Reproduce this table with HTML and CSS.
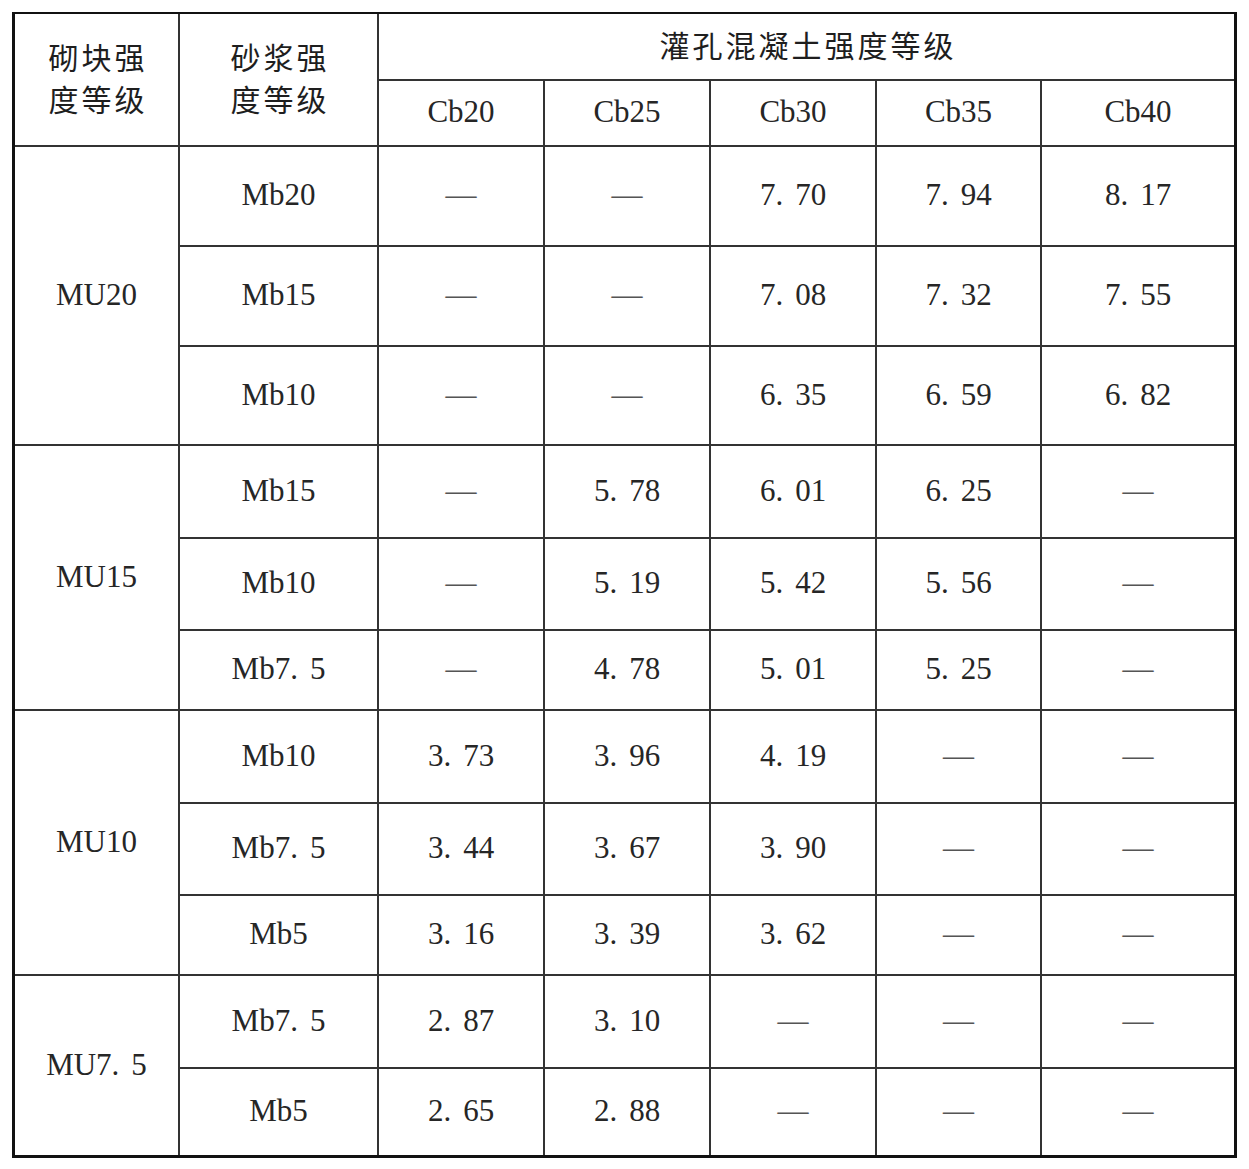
FILE: index.html
```html
<!DOCTYPE html>
<html lang="zh-CN">
<head>
<meta charset="utf-8">
<title>灌孔混凝土砌块砌体抗压强度</title>
<link rel="stylesheet" href="styles.css">
</head>
<body>
<table class="grid">
  <colgroup>
    <col class="c1"><col class="c2"><col class="cn"><col class="cn"><col class="cn"><col class="c6"><col class="c7">
  </colgroup>
  <thead>
    <tr class="h1">
      <th class="zh" rowspan="2">砌块强<br>度等级</th>
      <th class="zh" rowspan="2">砂浆强<br>度等级</th>
      <th class="zh end" colspan="5">灌孔混凝土强度等级</th>
    </tr>
    <tr class="h2">
      <th>Cb20</th><th>Cb25</th><th>Cb30</th><th>Cb35</th><th class="end">Cb40</th>
    </tr>
  </thead>
  <tbody>
    <tr class="ra">
      <td rowspan="3">MU20</td>
      <td>Mb20</td><td class="dash">—</td><td class="dash">—</td><td>7<span class="pt">.</span>70</td><td>7<span class="pt">.</span>94</td><td class="end">8<span class="pt">.</span>17</td>
    </tr>
    <tr class="ra">
      <td>Mb15</td><td class="dash">—</td><td class="dash">—</td><td>7<span class="pt">.</span>08</td><td>7<span class="pt">.</span>32</td><td class="end">7<span class="pt">.</span>55</td>
    </tr>
    <tr class="rb">
      <td>Mb10</td><td class="dash">—</td><td class="dash">—</td><td>6<span class="pt">.</span>35</td><td>6<span class="pt">.</span>59</td><td class="end">6<span class="pt">.</span>82</td>
    </tr>
    <tr class="rc">
      <td rowspan="3">MU15</td>
      <td>Mb15</td><td class="dash">—</td><td>5<span class="pt">.</span>78</td><td>6<span class="pt">.</span>01</td><td>6<span class="pt">.</span>25</td><td class="dash end">—</td>
    </tr>
    <tr class="rd">
      <td>Mb10</td><td class="dash">—</td><td>5<span class="pt">.</span>19</td><td>5<span class="pt">.</span>42</td><td>5<span class="pt">.</span>56</td><td class="dash end">—</td>
    </tr>
    <tr class="re">
      <td>Mb7<span class="pt">.</span>5</td><td class="dash">—</td><td>4<span class="pt">.</span>78</td><td>5<span class="pt">.</span>01</td><td>5<span class="pt">.</span>25</td><td class="dash end">—</td>
    </tr>
    <tr class="rc">
      <td rowspan="3">MU10</td>
      <td>Mb10</td><td>3<span class="pt">.</span>73</td><td>3<span class="pt">.</span>96</td><td>4<span class="pt">.</span>19</td><td class="dash">—</td><td class="dash end">—</td>
    </tr>
    <tr class="rd">
      <td>Mb7<span class="pt">.</span>5</td><td>3<span class="pt">.</span>44</td><td>3<span class="pt">.</span>67</td><td>3<span class="pt">.</span>90</td><td class="dash">—</td><td class="dash end">—</td>
    </tr>
    <tr class="re">
      <td>Mb5</td><td>3<span class="pt">.</span>16</td><td>3<span class="pt">.</span>39</td><td>3<span class="pt">.</span>62</td><td class="dash">—</td><td class="dash end">—</td>
    </tr>
    <tr class="rc">
      <td rowspan="2" class="bottom">MU7<span class="pt">.</span>5</td>
      <td>Mb7<span class="pt">.</span>5</td><td>2<span class="pt">.</span>87</td><td>3<span class="pt">.</span>10</td><td class="dash">—</td><td class="dash">—</td><td class="dash end">—</td>
    </tr>
    <tr class="rf">
      <td class="bottom">Mb5</td><td class="bottom">2<span class="pt">.</span>65</td><td class="bottom">2<span class="pt">.</span>88</td><td class="dash bottom">—</td><td class="dash bottom">—</td><td class="dash end bottom">—</td>
    </tr>
  </tbody>
</table>
</body>
</html>
```

FILE: styles.css
```css
html, body {
  margin: 0;
  padding: 0;
  background: #ffffff;
}

body {
  padding: 12px 0 0 12px;
}

.grid {
  table-layout: fixed;
  border-collapse: separate;
  border-spacing: 0;
  width: 1225px;
  border-left: 3px solid #111;
  border-right: 3px solid #111;
  border-top: 2px solid #111;
  border-bottom: 3px solid #111;
  font-family: "Liberation Serif", "Noto Sans CJK SC", serif;
  font-size: 31px;
  color: #262626;
}

.c1 { width: 165px; }
.c2 { width: 199px; }
.cn { width: 166px; }
.c6 { width: 165px; }
.c7 { width: 192px; }

.grid th,
.grid td {
  box-sizing: border-box;
  padding: 0 0 2px 0;
  text-align: center;
  vertical-align: middle;
  font-weight: normal;
  border-right: 2px solid #333;
  border-bottom: 2px solid #333;
  line-height: 1.2;
  white-space: nowrap;
}

.grid .end { border-right: none; }
.grid .bottom { border-bottom: none; }

.grid .zh {
  font-family: "Noto Sans CJK SC", sans-serif;
  font-size: 30px;
  letter-spacing: 3px;
  padding: 0 0 6px 3px;
  line-height: 42px;
  color: #1e1e1e;
}

.grid .dash {
  color: #555;
}

.pt {
  margin-right: 12px;
}

.h1 { height: 67px; }
.h2 { height: 66px; }
.ra { height: 100px; }
.rb { height: 99px; }
.rc { height: 93px; }
.rd { height: 92px; }
.re { height: 80px; }
.rf { height: 86px; }
```
